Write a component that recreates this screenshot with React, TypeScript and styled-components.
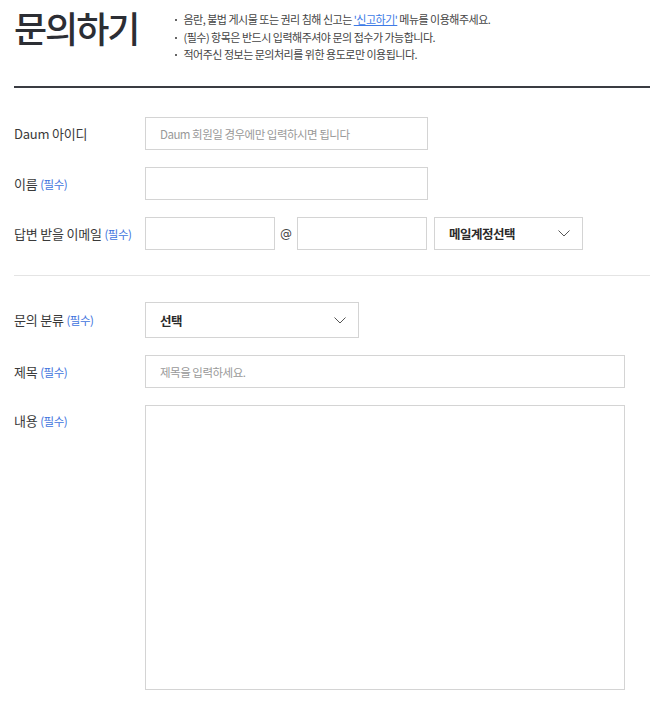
import React from "react";
import styled, { createGlobalStyle } from "styled-components";

const GlobalStyle = createGlobalStyle`
  html, body { margin: 0; padding: 0; background: #fff; }
  body {
    font-family: "Noto Sans CJK KR", "Noto Sans", sans-serif;
    color: #333;
    overflow: hidden;
  }
  * { box-sizing: border-box; }
`;

const Page = styled.div`
  padding: 0 0 0 14px;
  width: 650px;
  overflow: hidden;
`;

const Header = styled.header`
  display: flex;
  align-items: flex-start;
  gap: 37px;
  height: 86px;
  padding-top: 1px;
`;

const Title = styled.h1`
  margin: 0;
  font-size: 36px;
  line-height: 52px;
  font-weight: 500;
  letter-spacing: -2px;
  color: #2c2e34;
`;

const Notices = styled.ul`
  list-style: none;
  margin: 0;
  padding: 10px 0 0 0;
`;

const Notice = styled.li`
  position: relative;
  padding-left: 8px;
  font-size: 11px;
  line-height: 17.5px;
  letter-spacing: -0.5px;
  color: #444;
  &::before {
    content: "";
    position: absolute;
    left: 0;
    top: 8px;
    width: 2px;
    height: 2px;
    background: #666;
  }
`;

const Link = styled.a`
  color: #3e7be6;
  text-decoration: underline;
`;

const HeavyRule = styled.hr`
  margin: 0;
  border: 0;
  border-top: 2px solid #3a3c42;
  width: 700px;
`;

const ThinRule = styled.hr`
  margin: 0;
  border: 0;
  border-top: 1px solid #e4e4e4;
  width: 700px;
`;

const Section = styled.section<{ $top: number; $bottom: number }>`
  display: flex;
  flex-direction: column;
  gap: 17px;
  padding-top: ${(p) => p.$top}px;
  padding-bottom: ${(p) => p.$bottom}px;
`;

const Row = styled.div<{ $top?: boolean }>`
  display: flex;
  align-items: ${(p) => (p.$top ? "flex-start" : "center")};
`;

const Label = styled.label`
  width: 131px;
  flex: none;
  font-size: 13px;
  line-height: 32px;
  letter-spacing: -0.2px;
  color: #3a3a3a;
`;

const Req = styled.span`
  font-size: 11.5px;
  color: #3e73dd;
  letter-spacing: -0.5px;
`;

const Input = styled.input<{ $w: number }>`
  width: ${(p) => p.$w}px;
  height: 33px;
  border: 1px solid #d4d4d4;
  border-radius: 0;
  padding: 0 14px;
  font-family: inherit;
  font-size: 11.5px;
  letter-spacing: -0.5px;
  color: #333;
  outline: none;
  background: #fff;
  &::placeholder { color: #999; }
`;

const At = styled.span`
  width: 22px;
  text-align: center;
  font-family: "DejaVu Sans", sans-serif;
  font-size: 12px;
  color: #444;
`;

const Select = styled.div<{ $w: number; $h: number; $ml?: number }>`
  width: ${(p) => p.$w}px;
  height: ${(p) => p.$h}px;
  margin-left: ${(p) => p.$ml ?? 0}px;
  border: 1px solid #d4d4d4;
  display: flex;
  align-items: center;
  justify-content: space-between;
  padding: 0 12px 0 14px;
  font-size: 12.5px;
  font-weight: 700;
  letter-spacing: -0.5px;
  color: #2a2a2a;
  background: #fff;
`;

const TextArea = styled.textarea`
  width: 480px;
  height: 285px;
  border: 1px solid #d4d4d4;
  border-radius: 0;
  resize: none;
  outline: none;
  display: block;
`;

const Chevron = () => (
  <svg width="12" height="7" viewBox="0 0 12 7" fill="none">
    <path d="M0.5 0.5 L6 6 L11.5 0.5" stroke="#555" strokeWidth="1" />
  </svg>
);

export default function App() {
  return (
    <>
      <GlobalStyle />
      <Page>
        <Header>
          <Title>문의하기</Title>
          <Notices>
            <Notice>
              음란, 불법 게시물 또는 권리 침해 신고는 <Link href="#">'신고하기'</Link> 메뉴를 이용해주세요.
            </Notice>
            <Notice>(필수) 항목은 반드시 입력해주셔야 문의 접수가 가능합니다.</Notice>
            <Notice>적어주신 정보는 문의처리를 위한 용도로만 이용됩니다.</Notice>
          </Notices>
        </Header>
        <HeavyRule />
        <Section $top={29} $bottom={25}>
          <Row>
            <Label>Daum 아이디</Label>
            <Input $w={283} placeholder="Daum 회원일 경우에만 입력하시면 됩니다" />
          </Row>
          <Row>
            <Label>
              이름 <Req>(필수)</Req>
            </Label>
            <Input $w={283} />
          </Row>
          <Row>
            <Label>
              답변 받을 이메일 <Req>(필수)</Req>
            </Label>
            <Input $w={130} />
            <At>@</At>
            <Input $w={130} />
            <Select $w={149} $h={33} $ml={7}>
              메일계정선택
              <Chevron />
            </Select>
          </Row>
        </Section>
        <ThinRule />
        <Section $top={26} $bottom={0}>
          <Row>
            <Label>
              문의 분류 <Req>(필수)</Req>
            </Label>
            <Select $w={214} $h={36}>
              선택
              <Chevron />
            </Select>
          </Row>
          <Row>
            <Label>
              제목 <Req>(필수)</Req>
            </Label>
            <Input $w={480} placeholder="제목을 입력하세요." />
          </Row>
          <Row $top>
            <Label>
              내용 <Req>(필수)</Req>
            </Label>
            <TextArea />
          </Row>
        </Section>
      </Page>
    </>
  );
}
